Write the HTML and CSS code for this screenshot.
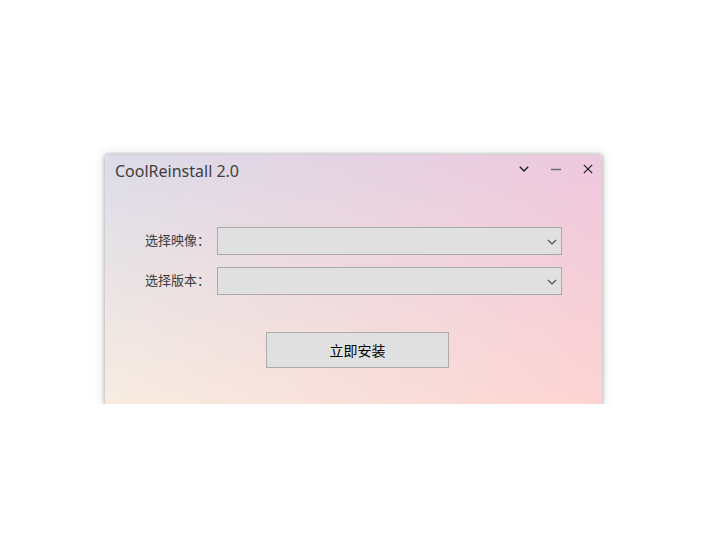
FILE: index.html
```html
<!DOCTYPE html>
<html lang="zh-CN">
<head>
<meta charset="utf-8">
<title>CoolReinstall 2.0</title>
<link rel="stylesheet" href="styles.css">
</head>
<body>
<div class="stage">
  <div class="window">
    <div class="titlebar">
      <div class="title">CoolReinstall 2.0</div>
      <div class="controls">
        <div class="ctrl">
          <svg width="12" height="8" viewBox="0 0 12 8"><path d="M1.8 1.8 L6 6 L10.2 1.8" fill="none" stroke="#1e1e1e" stroke-width="1.4"/></svg>
        </div>
        <div class="ctrl">
          <svg width="12" height="8" viewBox="0 0 12 8"><path d="M1 4.5 H11" fill="none" stroke="#6a6a6a" stroke-width="1.4"/></svg>
        </div>
        <div class="ctrl">
          <svg width="12" height="12" viewBox="0 0 12 12"><path d="M1.8 1.8 L10.2 10.2 M10.2 1.8 L1.8 10.2" fill="none" stroke="#1e1e1e" stroke-width="1.2"/></svg>
        </div>
      </div>
    </div>
    <div class="form">
      <div class="row">
        <div class="label">选择映像：</div>
        <div class="combo">
          <svg width="10" height="6" viewBox="0 0 10 6"><path d="M1 1 L5 5 L9 1" fill="none" stroke="#4a4a4a" stroke-width="1.1"/></svg>
        </div>
      </div>
      <div class="row">
        <div class="label">选择版本：</div>
        <div class="combo">
          <svg width="10" height="6" viewBox="0 0 10 6"><path d="M1 1 L5 5 L9 1" fill="none" stroke="#4a4a4a" stroke-width="1.1"/></svg>
        </div>
      </div>
    </div>
    <div class="actions">
      <div class="button">立即安装</div>
    </div>
  </div>
</div>
</body>
</html>
```

FILE: styles.css
```css
* { box-sizing: border-box; }
html, body { margin: 0; padding: 0; background: #ffffff; }
body {
  font-family: "Noto Sans", "Noto Sans CJK SC", sans-serif;
}
.stage {
  padding: 155px 0 0 105px;
}
.window {
  position: relative;
  width: 497px;
  height: 249px;
  border-radius: 4px;
  overflow: hidden;
  background: linear-gradient(to right, #dcdce9 0%, #e5d3e3 50%, #efc8de 100%);
  box-shadow: 0 0 0 1px rgba(0,0,0,0.07), 0 0 1px 3px rgba(0,0,0,0.07), 0 0 10px 4px rgba(0,0,0,0.08);
  display: flex;
  flex-direction: column;
}
.window::before {
  content: "";
  position: absolute;
  inset: 0;
  background: linear-gradient(to right, #f8ece1 0%, #f9e0da 50%, #fdd3d2 100%);
  -webkit-mask-image: linear-gradient(to bottom, transparent 0%, #000 100%);
  mask-image: linear-gradient(to bottom, transparent 0%, #000 100%);
  pointer-events: none;
}
.window > * { position: relative; }
.titlebar {
  height: 30px;
  display: flex;
  align-items: center;
  justify-content: space-between;
}
.title {
  padding-left: 10px;
  padding-top: 2px;
  font-size: 16px;
  color: #3f3f3f;
}
.controls {
  display: flex;
  height: 30px;
  margin-right: -2px;
}
.ctrl {
  width: 32px;
  height: 28px;
  display: flex;
  align-items: center;
  justify-content: center;
}
.form {
  margin-top: 42px;
  display: flex;
  flex-direction: column;
  gap: 12px;
  padding-left: 40px;
}
.row {
  display: flex;
  align-items: center;
  height: 28px;
}
.label {
  width: 65px;
  margin-right: 7px;
  padding-bottom: 4px;
  font-family: "Noto Sans CJK SC", sans-serif;
  font-size: 13px;
  color: #3c3c3c;
  white-space: nowrap;
}
.combo {
  width: 345px;
  height: 28px;
  background: #e0e0e0;
  border: 1px solid #a9a9a9;
  display: flex;
  align-items: center;
  justify-content: flex-end;
  padding-right: 4px;
  padding-top: 1px;
}
.actions {
  margin-top: 37px;
  padding-left: 161px;
}
.button {
  width: 183px;
  height: 36px;
  background: #e0e0e0;
  border: 1px solid #ababab;
  display: flex;
  align-items: center;
  justify-content: center;
  font-family: "Noto Sans CJK SC", sans-serif;
  font-size: 14px;
  color: #000;
}
```
